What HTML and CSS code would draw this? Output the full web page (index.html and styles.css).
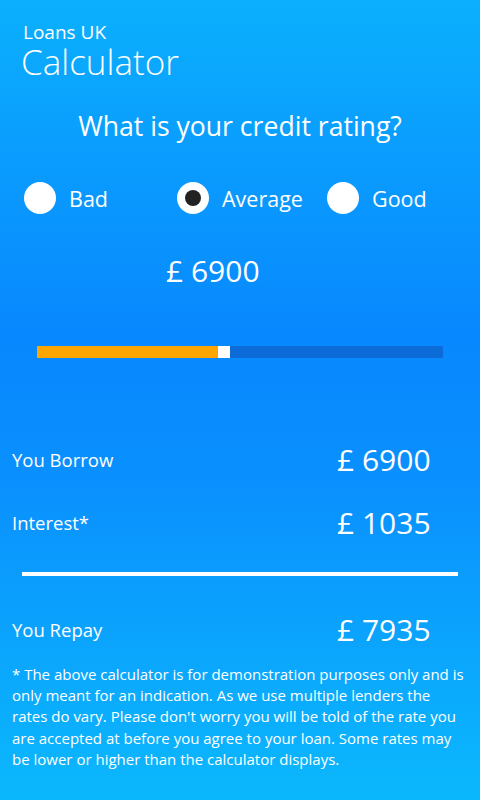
FILE: index.html
```html
<!DOCTYPE html>
<html lang="en">
<head>
    <meta charset="UTF-8">
    <meta name="viewport" content="width=device-width, initial-scale=1.0">
    <title>Loans UK Calculator</title>
    <link rel="stylesheet" href="styles.css">
</head>
<body>
    <div class="page">
        <div class="title">
            <div class="app-name">Loans UK</div>
            <h1>Calculator</h1>
        </div>

        <h2 class="question">What is your credit rating?</h2>

        <div class="ratings">
            <label class="rating">
                <span class="radio"></span>
                <span>Bad</span>
            </label>
            <label class="rating rating-mid">
                <span class="radio checked"></span>
                <span>Average</span>
            </label>
            <label class="rating">
                <span class="radio"></span>
                <span>Good</span>
            </label>
        </div>

        <div class="amount">£ 6900</div>

        <div class="slider">
            <div class="slider-fill" style="width: 181px;"></div>
            <div class="slider-thumb"></div>
            <div class="slider-rest"></div>
        </div>

        <div class="summary">
            <div class="row">
                <span class="label">You Borrow</span>
                <span class="value">£ 6900</span>
            </div>
            <div class="row">
                <span class="label">Interest*</span>
                <span class="value">£ 1035</span>
            </div>
            <hr class="divider">
            <div class="row">
                <span class="label">You Repay</span>
                <span class="value">£ 7935</span>
            </div>
        </div>

        <p class="disclaimer">* The above calculator is for demonstration purposes only and is only meant for an indication. As we use multiple lenders the rates do vary. Please don't worry you will be told of the rate you are accepted at before you agree to your loan. Some rates may be lower or higher than the calculator displays.</p>
    </div>
</body>
</html>
```

FILE: styles.css
```css
html, body {
    height: 100%;
}

body {
    margin: 0;
    font-family: "Open Sans", "Noto Sans", sans-serif;
    color: white;
    background: linear-gradient(180deg, #0bb0fd 0%, #0a9cfe 20%, #0888fe 42%, #0a90fe 60%, #0bb8fc 100%);
}

.page {
    width: 480px;
    height: 800px;
    overflow: hidden;
}

.title {
    padding: 20px 0 0 23px;
}

.app-name {
    font-size: 19px;
    line-height: 24px;
}

.title h1 {
    margin: 0 0 0 -2px;
    font-size: 35px;
    font-weight: 300;
    line-height: 36px;
}

.question {
    margin: 28px 0 0;
    text-align: center;
    font-size: 26.6px;
    font-weight: 400;
    line-height: 36px;
}

.ratings {
    display: flex;
    margin: 38px 0 0 24px;
}

.rating {
    display: flex;
    align-items: center;
    gap: 13px;
    width: 153px;
    font-size: 21.5px;
}

.rating-mid {
    width: 150px;
}

.radio {
    width: 32px;
    height: 32px;
    border-radius: 50%;
    background: white;
    display: flex;
    align-items: center;
    justify-content: center;
}

.radio.checked::after {
    content: "";
    width: 16px;
    height: 16px;
    border-radius: 50%;
    background: #222;
}

.amount {
    margin: 39px 0 0 166px;
    font-size: 30px;
    line-height: 36px;
}

.slider {
    display: flex;
    height: 12px;
    margin: 57px 37px 0;
}

.slider-fill {
    background: #ffa500;
}

.slider-thumb {
    width: 12px;
    background: white;
}

.slider-rest {
    flex: 1;
    background: #0c6bd6;
}

.summary {
    margin-top: 70px;
}

.row {
    display: flex;
    align-items: center;
    padding-left: 12px;
    height: 63px;
}

.label {
    width: 325px;
    font-size: 18.5px;
}

.value {
    font-size: 30px;
}

.divider {
    margin: 18px 22px 22px;
    border: 0;
    height: 4px;
    background: white;
}

.disclaimer {
    margin: 3px 12px 0;
    font-size: 15px;
    line-height: 21.2px;
}
```
